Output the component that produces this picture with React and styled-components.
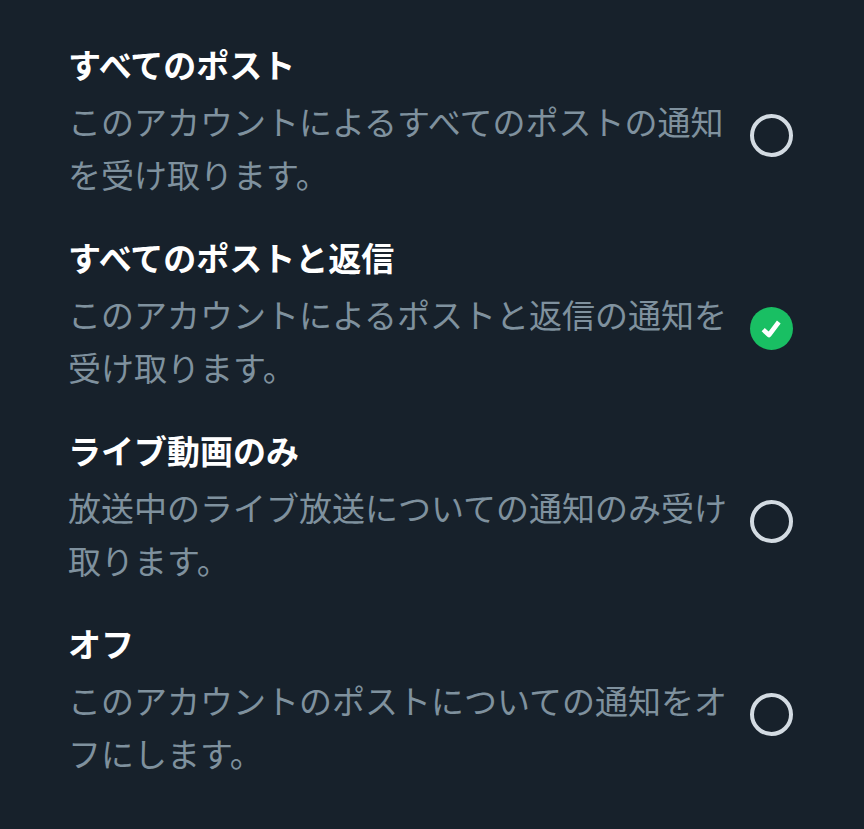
import React, { useState } from 'react'
import { styled, css, createGlobalStyle } from 'styled-components'

const OPTIONS = [
  {
    id: 'all-posts',
    title: 'すべてのポスト',
    description: 'このアカウントによるすべてのポストの通知を受け取ります。'
  },
  {
    id: 'posts-replies',
    title: 'すべてのポストと返信',
    description: 'このアカウントによるポストと返信の通知を受け取ります。'
  },
  {
    id: 'live-video',
    title: 'ライブ動画のみ',
    description: '放送中のライブ放送についての通知のみ受け取ります。'
  },
  {
    id: 'off',
    title: 'オフ',
    description: 'このアカウントのポストについての通知をオフにします。'
  }
]

const GlobalStyle = createGlobalStyle`
  body {
    margin: 0;
    background: #17212b;
    font-family: 'Noto Sans CJK JP', sans-serif;
  }
`

const OptionList = styled('form')`
  display: flex;
  flex-direction: column;
  gap: 33px;
  box-sizing: border-box;
  padding: 41px 71px 41px 68px;
`

const Option = styled('label')`
  display: flex;
  align-items: center;
  gap: 12px;
  cursor: pointer;
`

const OptionText = styled('span')`
  flex: 1;
  min-width: 0;
`

const Title = styled('span')`
  display: block;
  margin-bottom: 8px;
  color: #fff;
  font-size: 33px;
  font-weight: bold;
  line-height: 46px;
`

const Description = styled('span')`
  display: block;
  color: #7f919e;
  font-size: 33px;
  line-height: 53px;
`

const Radio = styled('span')`
  display: grid;
  flex: none;
  width: 43px;
  height: 43px;
  margin-top: 28px;

  > * {
    grid-area: 1 / 1;
  }
`

const RadioInput = styled('input').attrs({ type: 'radio' })`
  appearance: none;
  box-sizing: border-box;
  width: 100%;
  height: 100%;
  margin: 0;
  border-radius: 50%;
  cursor: pointer;
  ${({ checked }) =>
    checked
      ? css`
          background: #19bf63;
        `
      : css`
          border: 4px solid #d3dbe2;
        `};
`

const CheckIcon = styled('svg')`
  width: 100%;
  height: 100%;
  pointer-events: none;
`

const App = () => {
  const [selected, setSelected] = useState('posts-replies')

  return (
    <>
      <GlobalStyle />
      <OptionList>
        {OPTIONS.map(({ id, title, description }) => (
          <Option key={id} htmlFor={id}>
            <OptionText>
              <Title>{title}</Title>
              <Description>{description}</Description>
            </OptionText>
            <Radio>
              <RadioInput
                id={id}
                name='notifications'
                value={id}
                checked={selected === id}
                onChange={() => setSelected(id)}
              />
              {selected === id && (
                <CheckIcon viewBox='0 0 43 43' fill='none' aria-hidden='true'>
                  <path
                    d='M13.2 22.6L19 28L28.8 15'
                    stroke='#fff'
                    strokeWidth='4.6'
                    strokeLinejoin='round'
                  />
                </CheckIcon>
              )}
            </Radio>
          </Option>
        ))}
      </OptionList>
    </>
  )
}

export default App
